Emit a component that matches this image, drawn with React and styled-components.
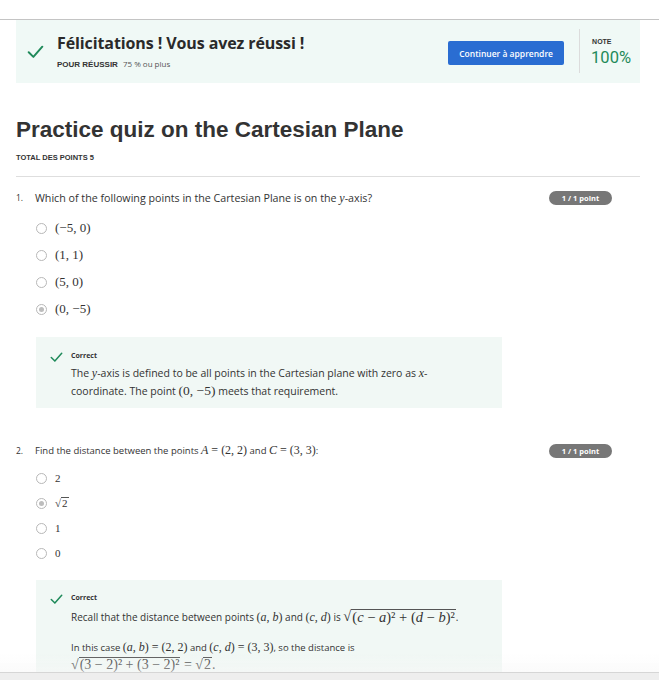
import React from 'react';
import styled, { createGlobalStyle } from 'styled-components';

const GlobalStyle = createGlobalStyle`
    html, body {
        margin: 0;
        padding: 0;
        background: #ffffff;
        overflow: hidden;
    }
    body {
        font-family: 'Open Sans', 'Liberation Sans', sans-serif;
        color: #333333;
    }
`;

const Page = styled.div`
    padding-top: 19px;
    width: 659px;
`;

const TopRule = styled.div`
    border-top: 1px solid #c4c4c4;
`;

const Content = styled.div`
    width: 624px;
    margin-left: 16px;
`;

const Banner = styled.div`
    display: flex;
    align-items: center;
    height: 63px;
    background-color: #f0f9f6;
    padding-left: 11px;
    box-sizing: border-box;
`;

const BannerText = styled.div`
    display: flex;
    flex-direction: column;
    margin-left: 13px;
    flex: 1;
`;

const BannerTitle = styled.div`
    font-family: 'Open Sans', sans-serif;
    font-weight: 700;
    font-size: 16px;
    letter-spacing: -0.1px;
    color: #2a2a2a;
    line-height: 20px;
`;

const PassLine = styled.div`
    margin-top: 6px;
    font-size: 8px;
    line-height: 10px;
    color: #555;
    display: flex;
    gap: 5px;
    align-items: baseline;
`;

const SmallCaps = styled.span`
    font-family: 'Liberation Sans', Arial, sans-serif;
    font-weight: 700;
    font-size: ${p => p.size || 8}px;
    color: #333;
    text-transform: uppercase;
`;

const ContinueButton = styled.button`
    background-color: #2a6dd2;
    color: #ffffff;
    border: none;
    border-radius: 2px;
    width: 116px;
    height: 24px;
    font-family: 'Open Sans', sans-serif;
    font-weight: 600;
    font-size: 8.5px;
    margin-top: 3px;
    cursor: pointer;
`;

const GradeBox = styled.div`
    align-self: stretch;
    margin: 9px 0 10px 15px;
    border-left: 1px solid #dcdcdc;
    padding: 8px 9px 0 12px;
    display: flex;
    flex-direction: column;
    line-height: 10px;
`;

const GradeValue = styled.div`
    font-family: Roboto, 'Open Sans', sans-serif;
    font-size: 16.5px;
    color: #1f8a5a;
    line-height: 18px;
    margin-top: 2px;
    margin-left: -1px;
`;

const QuizTitle = styled.h1`
    font-family: 'Liberation Sans', Arial, sans-serif;
    font-weight: 700;
    font-size: 22.5px;
    color: #333;
    margin: 35px 0 0;
    line-height: 24px;
`;

const TotalPoints = styled.div`
    margin-top: 10px;
    padding-bottom: 13px;
    border-bottom: 1px solid #dedede;
    font-size: 7.5px;
    line-height: 10px;
`;

const Question = styled.div`
    margin-top: ${p => p.top}px;
`;

const QuestionHead = styled.div`
    display: flex;
    align-items: center;
    font-size: ${p => p.size}px;
    line-height: 16px;
    color: #333;
    padding-right: 28px;
`;

const QuestionNumber = styled.span`
    width: 19px;
    font-size: 8.5px;
`;

const QuestionText = styled.span`
    flex: 1;
`;

const PointBadge = styled.span`
    background-color: #777777;
    color: #ffffff;
    border-radius: 8px;
    width: 63px;
    height: 14px;
    line-height: 14px;
    text-align: center;
    font-family: 'Open Sans', sans-serif;
    font-weight: 700;
    font-size: 7.5px;
`;

const Options = styled.div`
    display: flex;
    flex-direction: column;
    gap: ${p => p.gap}px;
    margin: ${p => p.top}px 0 0 20px;
`;

const OptionRow = styled.label`
    display: flex;
    align-items: center;
    height: 14px;
`;

const Radio = styled.span`
    width: 11px;
    height: 11px;
    border-radius: 50%;
    border: 1px solid #b8b8b8;
    box-sizing: border-box;
    display: flex;
    align-items: center;
    justify-content: center;
    margin-right: 8px;
    &::after {
        content: '';
        display: ${p => (p.checked ? 'block' : 'none')};
        width: 5px;
        height: 5px;
        border-radius: 50%;
        background: #bdbdbd;
    }
`;

const Math = styled.span`
    font-family: 'Liberation Serif', 'DejaVu Serif', serif;
    font-size: ${p => p.size || 13}px;
    color: #333;
    white-space: nowrap;
`;

const V = styled.i`
    font-style: italic;
`;

const Sqrt = styled.span`
    display: inline-flex;
    align-items: flex-end;
`;

const Radicand = styled.span`
    border-top: 1px solid #555;
    padding: 0 1px;
    line-height: 1.05;
`;

const Feedback = styled.div`
    width: 466px;
    margin: ${p => p.top}px 0 0 20px;
    background-color: #f1f8f5;
    display: flex;
    padding: ${p => p.pad};
    box-sizing: border-box;
    min-height: ${p => p.h}px;
`;

const FeedbackIcon = styled.div`
    width: 21px;
    margin-left: 14px;
    padding-top: 2px;
    svg {
        display: block;
    }
`;

const FeedbackBody = styled.div`
    flex: 1;
`;

const CorrectLabel = styled.div`
    font-family: 'Open Sans', sans-serif;
    font-weight: 700;
    font-size: 7px;
    color: #333;
    line-height: 12px;
`;

const Explanation = styled.div`
    font-size: ${p => p.size}px;
    line-height: ${p => p.lh}px;
    color: #333;
    margin-top: ${p => p.top || 3}px;
`;

const BottomBar = styled.div`
    position: fixed;
    left: 0;
    right: 0;
    bottom: 0;
    height: 7px;
    background: #eeeeee;
    border-top: 1px solid #d6d6d6;
    &::before {
        content: '';
        position: absolute;
        left: 0;
        right: 0;
        bottom: 8px;
        height: 18px;
        background: linear-gradient(rgba(250, 250, 250, 0), rgba(246, 246, 246, 0.5));
    }
`;

function Check({ size }) {
    return (
        <svg width={size} height={size * 0.8} viewBox="0 0 20 16" fill="none">
            <path d="M2 8.5 L7.5 14 L18 2" stroke="#1f8a5a" strokeWidth="2.3" strokeLinecap="round" strokeLinejoin="round" />
        </svg>
    );
}

function Option({ checked, children }) {
    return (
        <OptionRow>
            <Radio checked={checked} />
            {children}
        </OptionRow>
    );
}

export default function App() {
    return (
        <Page>
            <GlobalStyle />
            <TopRule />
            <Content>
                <Banner>
                    <Check size={17} />
                    <BannerText>
                        <BannerTitle>Félicitations ! Vous avez réussi !</BannerTitle>
                        <PassLine>
                            <SmallCaps size={8}>Pour réussir</SmallCaps>
                            <span>75 % ou plus</span>
                        </PassLine>
                    </BannerText>
                    <ContinueButton>Continuer à apprendre</ContinueButton>
                    <GradeBox>
                        <SmallCaps size={7}>Note</SmallCaps>
                        <GradeValue>100%</GradeValue>
                    </GradeBox>
                </Banner>

                <QuizTitle>Practice quiz on the Cartesian Plane</QuizTitle>
                <TotalPoints>
                    <SmallCaps size={7.5}>Total des points 5</SmallCaps>
                </TotalPoints>

                <Question top={13}>
                    <QuestionHead size={10.7}>
                        <QuestionNumber>1.</QuestionNumber>
                        <QuestionText>
                            Which of the following points in the Cartesian Plane is on the <Math size={12}><V>y</V></Math>-axis?
                        </QuestionText>
                        <PointBadge>1 / 1 point</PointBadge>
                    </QuestionHead>
                    <Options gap={13} top={15}>
                        <Option><Math>(−5, 0)</Math></Option>
                        <Option><Math>(1, 1)</Math></Option>
                        <Option><Math>(5, 0)</Math></Option>
                        <Option checked><Math>(0, −5)</Math></Option>
                    </Options>
                    <Feedback top={21} pad="13px 0 0" h={71}>
                        <FeedbackIcon><Check size={13} /></FeedbackIcon>
                        <FeedbackBody>
                            <CorrectLabel>Correct</CorrectLabel>
                            <Explanation size={10.5} lh={17} top={3}>
                                The <Math size={12}><V>y</V></Math>-axis is defined to be all points in the Cartesian plane with zero as <Math size={12}><V>x</V></Math>-<br />
                                coordinate. The point <Math size={13.5}>(0, −5)</Math> meets that requirement.
                            </Explanation>
                        </FeedbackBody>
                    </Feedback>
                </Question>

                <Question top={34}>
                    <QuestionHead size={9.5}>
                        <QuestionNumber>2.</QuestionNumber>
                        <QuestionText>
                            Find the distance between the points <Math size={12}><V>A</V> = (2, 2)</Math> and <Math size={12}><V>C</V> = (3, 3)</Math>:
                        </QuestionText>
                        <PointBadge>1 / 1 point</PointBadge>
                    </QuestionHead>
                    <Options gap={11} top={12}>
                        <Option><Math size={11}>2</Math></Option>
                        <Option checked><Math size={11}><Sqrt>√<Radicand>2</Radicand></Sqrt></Math></Option>
                        <Option><Math size={11}>1</Math></Option>
                        <Option><Math size={11}>0</Math></Option>
                    </Options>
                    <Feedback top={20} pad="12px 0 4px" h={100}>
                        <FeedbackIcon><Check size={13} /></FeedbackIcon>
                        <FeedbackBody>
                            <CorrectLabel>Correct</CorrectLabel>
                            <Explanation size={10} lh={17} top={4}>
                                Recall that the distance between points <Math size={12}>(<V>a</V>, <V>b</V>)</Math> and <Math size={12}>(<V>c</V>, <V>d</V>)</Math> is{' '}
                                <Math size={14.5}><Sqrt>√<Radicand>(<V>c</V> − <V>a</V>)² + (<V>d</V> − <V>b</V>)²</Radicand></Sqrt></Math>.
                            </Explanation>
                            <Explanation size={9.5} lh={17} top={13}>
                                In this case <Math size={12}>(<V>a</V>, <V>b</V>) = (2, 2)</Math> and <Math size={12}>(<V>c</V>, <V>d</V>) = (3, 3)</Math>, so the distance is<br />
                                <Math size={14}><Sqrt>√<Radicand>(3 − 2)² + (3 − 2)²</Radicand></Sqrt> = <Sqrt>√<Radicand>2</Radicand></Sqrt>.</Math>
                            </Explanation>
                        </FeedbackBody>
                    </Feedback>
                </Question>
            </Content>
            <BottomBar />
        </Page>
    );
}
